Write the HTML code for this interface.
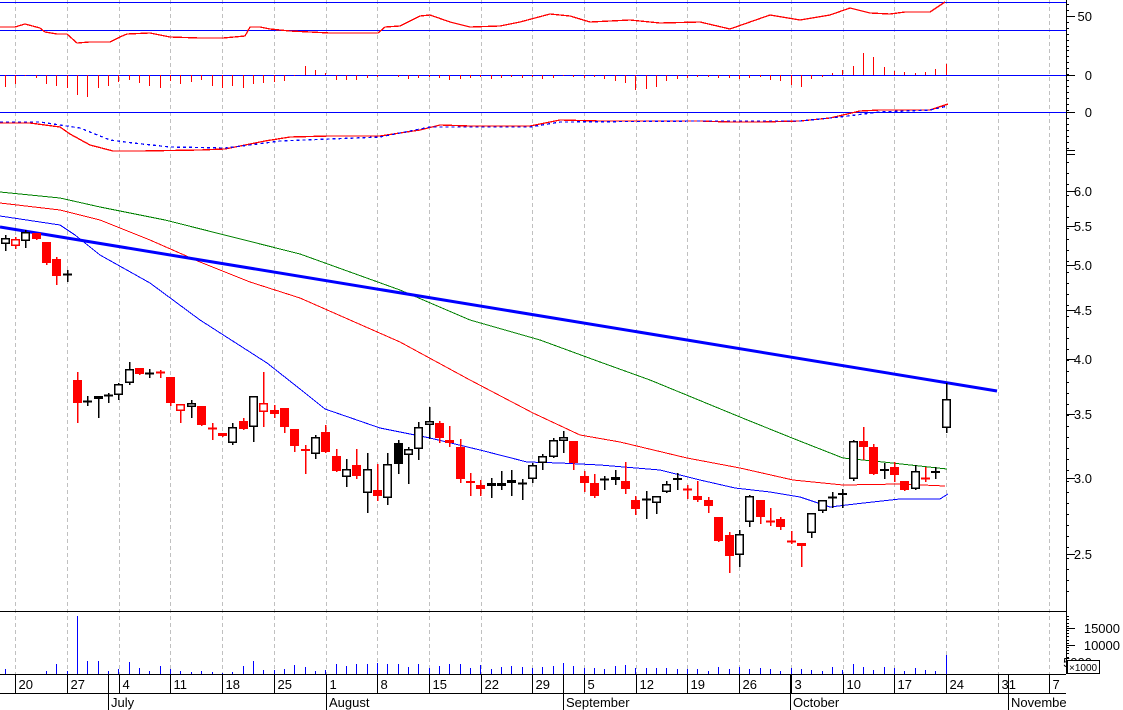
<!DOCTYPE html>
<html><head><meta charset="utf-8"><style>
html,body{margin:0;padding:0;background:#fff;overflow:hidden}
svg{display:block;font-family:"Liberation Sans",Arial,sans-serif}
</style></head><body>
<svg id="s" width="1123" height="710" xmlns="http://www.w3.org/2000/svg" shape-rendering="crispEdges"></svg>
<script>
var S=document.getElementById('s'),h='';
function L(x1,y1,x2,y2,c,w,extra){h+='<line x1="'+x1+'" y1="'+y1+'" x2="'+x2+'" y2="'+y2+'" stroke="'+c+'" stroke-width="'+(w||1)+'" '+(extra||'')+'/>';}
function P(pts,c,w,extra){h+='<polyline fill="none" stroke="'+c+'" stroke-width="'+(w||1)+'" '+(extra||'')+' points="'+pts.map(function(p){return p.join(',')}).join(' ')+'"/>';}
function T(x,y,t,anchor){h+='<text x="'+x+'" y="'+y+'" font-size="13" fill="#000" '+(anchor?'text-anchor="'+anchor+'"':'')+'>'+t+'</text>';}
// grid
for(var k=0;k<=20;k++){var gx=Math.round(15.3+51.7*k)+.5;L(gx,0,gx,674,'#c0c0c0',1,'stroke-dasharray="4,3"');}
// blue horizontal lines
[2,30,75,112].forEach(function(y){L(0,y+.5,1066,y+.5,'#0000ff',1.3);});
// top red line
P([[0,27],[15,27],[25,24],[40,28],[45,32],[57,34],[67,34],[77,43],[90,42],[110,42],[120,37],[127,34],[150,33],[170,37],[200,38],[223,38],[245,36],[250,27],[260,27],[270,29],[290,31],[310,32],[330,33],[378,33],[385,27],[400,26],[420,16],[430,15],[450,22],[470,27],[500,26],[520,22],[550,14],[570,16],[590,22],[630,20],[660,23],[700,22],[730,29],[750,22],[770,15],[800,20],[830,15],[850,8],[870,13],[890,14],[905,12],[930,12],[945,2]],'#ff0000',1.3);
// histogram
var hv=[12,9,1,3,9,11,13,20,22,13,11,7,5,8,11,13,6,9,7,5,11,13,11,13,9,8,7,6,1,-9,-5,-2,5,5,5,3,2,0,2,4,3,2,3,5,4,3,2,4,3,2,3,2,4,3,1,2,3,2,4,6,8,15,14,12,6,4,3,2,2,3,3,4,3,2,5,6,10,12,4,2,-2,-5,-9,-22,-18,-8,-4,-3,-2,-3,-6,-11];
for(var i=0;i<hv.length;i++){var x=Math.round(4.7+10.34*i)+.5;if(hv[i]!=0)L(x,75,x,75+hv[i],'#ff0000',1.3);}
// MACD lines
P([[0,123],[30,123],[60,127],[70,134],[90,145],[113,151],[140,151],[200,150],[225,149],[240,146],[265,141],[290,137],[330,136],[380,136],[420,130],[440,125],[470,126],[530,126],[560,120],[600,121],[700,121],[730,122],[760,122],[800,121],[830,118],[860,111],[880,110],[930,110],[948,104]],'#ff0000',1.3);
P([[0,122],[40,122],[60,125],[80,128],[110,140],[133,143],[170,147],[225,148],[250,145],[280,141],[330,139],[380,137],[430,127],[460,127],[530,127],[560,122],[700,121],[800,121],[840,117],[880,112],[930,110],[948,106]],'#0000ff',1.3,'stroke-dasharray="3,3"');
// MAs
P([[0,192],[60,198],[100,207],[165,220],[300,254],[400,290],[470,320],[540,340],[600,362],[650,380],[740,417],[792,438],[843,458],[883,462],[947,469]],'#008000',1);
P([[0,203],[60,210],[100,220],[150,240],[200,262],[250,282],[300,298],[350,320],[400,342],[470,380],[533,413],[580,435],[620,442],[687,458],[740,468],[793,480],[843,485],[900,484],[945,486]],'#ff0000',1);
P([[0,216],[20,219],[60,225],[75,235],[100,255],[150,283],[200,320],[267,363],[300,389],[325,409],[380,428],[430,438],[480,450],[527,462],[560,463],[600,465],[636,468],[660,470],[700,480],[735,488],[770,492],[800,497],[830,507],[855,504],[900,499],[940,499],[948,494]],'#0000ff',1);
// trendline
L(0,227,997,391,'#0000ff',3,'shape-rendering="auto"');
// candles [day, bodyTop, bodyBottom, wickTop, wickBottom, type]
var C=[[0,238,244,235,250,'w'],[1,239,246,237,248,'ro'],[2,232,241,230,247,'w'],[3,233,239,233,239,'r'],[4,242,263,242,264,'r'],[5,259,276,257,284,'r'],[6,274,274,270,281,'b'],
[7,380,403,372,422,'r'],[8,401,401,396,405,'b'],[9,396,399,396,417,'w'],[10,395,396,393,402,'b'],[11,384,395,383,399,'w'],[12,369,383,362,384,'w'],[13,368,374,368,374,'r'],[14,373,373,369,377,'b'],[15,372,372,370,377,'r'],[16,377,403,377,405,'r'],[17,404,411,404,422,'ro'],[18,403,407,400,417,'w'],[19,406,425,406,425,'r'],[20,428,428,423,439,'r'],[21,433,436,433,436,'r'],[22,427,443,423,444,'w'],[23,421,429,418,429,'r'],[24,396,427,396,441,'w'],[25,403,412,372,426,'ro'],[26,410,414,405,417,'r'],[27,408,427,408,432,'r'],[28,429,446,429,451,'r'],
[29,449,451,445,473,'ro'],[30,437,454,435,458,'w'],[31,432,452,425,452,'r'],[32,456,471,449,471,'r'],[33,469,477,459,486,'w'],[34,465,476,449,478,'r'],[35,469,493,453,512,'w'],[36,490,496,464,500,'r'],[37,464,498,453,504,'w'],[38,443,464,440,473,'b'],[39,449,455,447,483,'w'],[40,427,449,422,459,'w'],[41,421,425,407,438,'w'],[42,423,438,421,442,'r'],[43,440,443,426,446,'ro'],[44,447,479,439,482,'r'],[45,481,483,473,495,'r'],[46,485,489,480,495,'r'],[47,483,486,478,497,'b'],[48,483,486,471,489,'b'],[49,480,483,470,495,'b'],[50,483,483,479,499,'b'],[51,465,479,463,482,'w'],[52,456,463,454,469,'w'],[53,440,457,438,457,'w'],[54,437,441,431,452,'w'],[55,441,463,441,469,'r'],[56,476,483,471,491,'r'],[57,483,496,474,497,'r'],[58,479,479,476,489,'b'],[59,477,480,470,484,'w'],
[60,481,489,462,493,'r'],[61,500,509,496,514,'r'],[62,499,499,491,518,'b'],[63,496,503,496,513,'w'],[64,484,492,481,492,'w'],[65,478,480,473,489,'b'],[66,489,489,485,498,'r'],[67,496,500,481,501,'r'],[68,500,506,497,512,'r'],[69,517,541,517,541,'r'],[70,535,556,532,572,'r'],[71,534,555,530,566,'w'],[72,496,522,495,526,'w'],[73,500,517,500,523,'r'],[74,521,521,508,525,'r'],[75,519,527,517,529,'r'],[76,541,541,531,543,'r'],[77,543,546,543,566,'ro'],[78,513,533,513,537,'w'],[79,500,511,500,512,'w'],[80,497,497,492,507,'b'],[81,493,495,489,507,'w'],[82,441,479,440,480,'w'],[83,441,447,427,459,'r'],[84,447,474,444,474,'r'],[85,469,471,463,478,'b'],[86,467,475,462,481,'r'],[87,481,490,481,490,'r'],[88,471,489,465,489,'w'],[89,478,478,467,481,'r'],[90,471,473,467,478,'w'],[91,399,428,383,432,'w']];
C.forEach(function(c){var x=Math.round(4.7+10.34*c[0]);var t=c[5];var col=(t=='r'||t=='ro')?'#ff0000':'#000';
 L(x+.5,c[3],x+.5,c[4]+1,col,1.5);
 var hgt=c[2]-c[1];
 if(hgt<=1){L(x-4,c[1]+.5,x+5,c[1]+.5,col,2);}
 else{var fill=(t=='r'||t=='b')?col:'#fff';var inset=(t=='w'||t=='ro')?.75:0;
  h+='<rect x="'+(x-4+inset)+'" y="'+(c[1]+inset)+'" width="'+(9-2*inset)+'" height="'+(hgt-2*inset)+'" fill="'+fill+'" stroke="'+col+'" stroke-width="'+((t=='w'||t=='ro')?1.5:0)+'"/>';}
});
// volume
L(0,611.5,1066,611.5,'#000',1.3);
var vol=[5,0,0,0,3,10,3,58,13,13,3,5,12,6,3,8,5,3,2,3,2,1,2,8,13,4,4,5,9,7,3,4,10,8,10,10,11,10,10,7,10,6,8,10,10,6,9,5,7,8,7,6,7,8,11,8,6,6,5,8,9,6,6,6,6,5,5,5,3,7,5,7,5,6,5,3,6,5,4,3,7,4,10,7,4,7,6,3,6,4,3,19];
for(var i=0;i<vol.length;i++){var x=Math.round(4.7+10.34*i)+.5;if(vol[i])L(x,674,x,674-vol[i],'#0000ff',1.3);}
// axes
L(0,674.5,1066,674.5,'#000',1.3);L(0,693.5,1066,693.5,'#000',1.3);
L(1066.5,0,1066.5,674,'#000',1.3);
var days=['20','27','4','11','18','25','1','8','15','22','29','5','12','19','26','3','10','17','24','31','7'];
for(var k=0;k<days.length;k++){var gx=Math.round(15.3+51.7*k)+.5;L(gx,674,gx,693,'#000',1.3);T(gx+3,689,days[k]);}
T(1,689,'');
[[108,'July'],[326,'August'],[563,'September'],[790,'October'],[1008,'Novembe']].forEach(function(m){L(m[0]+.5,674,m[0]+.5,710,'#000',1.3);T(m[0]+3,707,m[1]);});
// right axis ticks
function tick(y,len){L(1066,y+.5,1066+len,y+.5,'#000',1);}
[16,75,112,191,226,265,310,359,414,478,554,628,645,662].forEach(function(y){tick(y,9);});
for(var y=4;y<48;y+=6)tick(y,3);for(var y=50;y<112;y+=6)tick(y,3);for(var y=118;y<158;y+=6)tick(y,3);
tick(150,9);tick(154,9);
for(var y=162;y<600;y+=11)tick(y,3);
for(var y=616;y<672;y+=3.4)tick(Math.round(y),3);
h+='<g font-size="13">';
[[16,'50'],[75,'0'],[112,'0'],[191,'6.0'],[226,'5.5'],[265,'5.0'],[310,'4.5'],[359,'4.0'],[414,'3.5'],[478,'3.0'],[554,'2.5'],[628,'15000'],[645,'10000'],[662,'5000']].forEach(function(l){T(1092+(l[1].length==5?28:0),l[0]+5,l[1],'end');});
h+='</g>';
h+='<rect x="1067.5" y="660.5" width="32" height="13" fill="#fff" stroke="#000"/><text x="1069" y="671" font-size="10">×1000</text>';
S.innerHTML=h;
</script>
</body></html>
